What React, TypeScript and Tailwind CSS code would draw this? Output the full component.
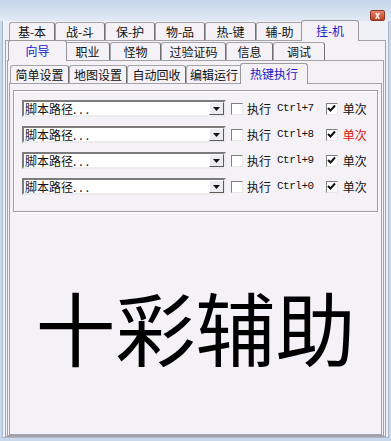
import React from "react";

const font = "font-['SimSun','Noto_Sans_CJK_SC',sans-serif]";

type TabProps = { label: string; width: string; active?: boolean };

const Tab: React.FC<TabProps> = ({ label, width, active }) => {
  if (active) {
    return (
      <div
        className={`${width} relative z-10 -mx-[2px] -mb-px h-[21px] rounded-t-[3px] border border-b-0 border-[#9a99a0] bg-[#f4f2f6] text-center text-[12px] leading-[19px] text-[#1818c8]`}
      >
        {label}
      </div>
    );
  }
  return (
    <div
      className={`${width} h-[18px] rounded-t-[3px] border border-b-0 border-[#a5a4aa] border-r-[#707070] bg-[#f4f2f6] text-center text-[12px] leading-[17px] text-[#111]`}
    >
      {label}
    </div>
  );
};

const Checkbox: React.FC<{ checked?: boolean }> = ({ checked }) => (
  <div className="flex h-[12px] w-[12px] items-center justify-center border border-t-[#808080] border-l-[#808080] border-r-[#e8e8e8] border-b-[#e8e8e8] bg-white">
    {checked && (
      <svg width="9" height="9" viewBox="0 0 9 9">
        <path d="M1 4 L3.5 6.5 L8 1.5" stroke="#111" strokeWidth="2" fill="none" />
      </svg>
    )}
  </div>
);

const Combo: React.FC = () => (
  <div className="flex h-[17px] w-[204px] items-center border-2 border-t-[#7b7b7b] border-l-[#7b7b7b] border-r-[#ececec] border-b-[#ececec] bg-white">
    <span className="flex-1 pl-[1px] text-[12px] leading-[13px] text-[#111]">
      脚本路径<span className="tracking-[3px]">...</span>
    </span>
    <div className="flex h-[13px] w-[15px] items-center justify-center border border-t-white border-l-white border-r-[#5a5a5a] border-b-[#5a5a5a] bg-[#ecebef]">
      <svg width="7" height="4" viewBox="0 0 7 4">
        <path d="M0 0 H7 L3.5 4 Z" fill="#111" />
      </svg>
    </div>
  </div>
);

const rows = [
  { key: "7", red: false },
  { key: "8", red: true },
  { key: "9", red: false },
  { key: "0", red: false },
];

export default function App() {
  return (
    <div className={`flex h-[441px] w-[391px] flex-col bg-[#c9d8eb] ${font}`}>
      <div className="flex h-[21px] justify-end bg-gradient-to-b from-[#c6d5ea] to-[#e2eaf4] pr-[6px] pt-[10px]">
        <div className="flex h-[11px] w-[15px] items-center justify-center rounded-[2px] border border-[#8a3a2a] bg-gradient-to-b from-[#e8846a] to-[#c23a1e] text-[9px] font-bold leading-none text-white">
          x
        </div>
      </div>
      <div className="mx-[2px] mb-[3px] flex flex-1 flex-col border-x border-b border-[#a8b8cc] bg-[#f0f1f6]">
        <div className="flex h-[19px] items-end pl-[6px]">
          <Tab label="基-本" width="w-[46px]" />
          <Tab label="战-斗" width="w-[50px]" />
          <Tab label="保-护" width="w-[50px]" />
          <Tab label="物-品" width="w-[50px]" />
          <Tab label="热-键" width="w-[51px]" />
          <Tab label="辅-助" width="w-[47px]" />
          <Tab label="挂-机" width="w-[58px]" active />
        </div>
        <div className="mx-[2px] flex flex-1 flex-col border border-[#a3a2a8] bg-[#f4f2f6] px-[1px]">
          <div className="flex h-[19px] items-end pl-[3px]">
            <Tab label="向导" width="w-[59px]" active />
            <Tab label="职业" width="w-[45px]" />
            <Tab label="怪物" width="w-[51px]" />
            <Tab label="过验证码" width="w-[65px]" />
            <Tab label="信息" width="w-[47px]" />
            <Tab label="调试" width="w-[52px]" />
          </div>
          <div className="flex flex-1 flex-col border border-[#a3a2a8] bg-[#f4f2f6] px-[1px]">
            <div className="flex h-[22px] items-end pl-[1px]">
              <Tab label="简单设置" width="w-[59px]" />
              <Tab label="地图设置" width="w-[58px]" />
              <Tab label="自动回收" width="w-[59px]" />
              <Tab label="编辑运行" width="w-[56px]" />
              <Tab label="热键执行" width="w-[68px]" active />
            </div>
            <div className="flex flex-1 flex-col border border-[#a3a2a8] bg-[#f4f2f6] px-[3px] pt-[6px]">
              <div className="flex flex-col gap-[9px] border border-[#9d9ca2] pb-[16px] pl-[8px] pt-[9px] shadow-[inset_1px_1px_0_#ffffff,1px_1px_0_#ffffff]">
                {rows.map((r) => (
                  <div key={r.key} className="flex h-[17px] items-center">
                    <Combo />
                    <div className="ml-[5px]">
                      <Checkbox />
                    </div>
                    <span className="ml-[4px] text-[12px] text-[#111]">执行</span>
                    <span className="ml-[6px] font-['Liberation_Mono',monospace] text-[11px] tracking-[-0.5px] text-[#111]">
                      Ctrl+{r.key}
                    </span>
                    <div className="ml-[12px]">
                      <Checkbox checked />
                    </div>
                    <span className={`ml-[5px] text-[12px] ${r.red ? "text-[#e01010]" : "text-[#111]"}`}>单次</span>
                  </div>
                ))}
              </div>
              <div className="flex flex-1 items-center justify-center pt-[3px]">
                <span className="font-['Noto_Sans_CJK_SC',sans-serif] text-[80px] leading-none text-black">十彩辅助</span>
              </div>
            </div>
          </div>
        </div>
      </div>
    </div>
  );
}
